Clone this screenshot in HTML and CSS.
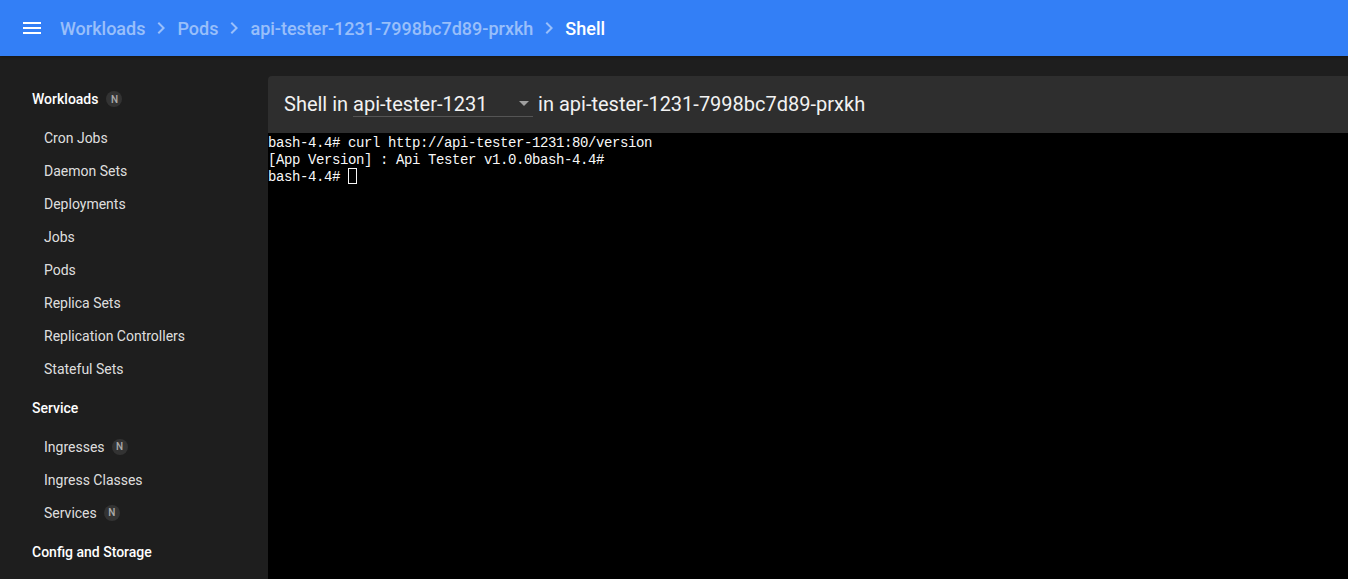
FILE: index.html
```html
<!DOCTYPE html>
<html lang="en">
<head>
<meta charset="utf-8">
<title>Shell - Kubernetes Dashboard</title>
<link rel="stylesheet" href="styles.css">
</head>
<body>
<header class="topbar">
  <svg class="menu-icon" viewBox="0 0 24 24" width="24" height="24"><path d="M3 18h18v-2H3v2zm0-5h18v-2H3v2zm0-7v2h18V6H3z"/></svg>
  <nav class="crumbs">
    <a class="crumb">Workloads</a>
    <svg class="chev" viewBox="0 0 24 24" width="24" height="24"><path d="M10 6L8.59 7.41 13.17 12l-4.58 4.59L10 18l6-6z"/></svg>
    <a class="crumb">Pods</a>
    <svg class="chev" viewBox="0 0 24 24" width="24" height="24"><path d="M10 6L8.59 7.41 13.17 12l-4.58 4.59L10 18l6-6z"/></svg>
    <a class="crumb">api-tester-1231-7998bc7d89-prxkh</a>
    <svg class="chev" viewBox="0 0 24 24" width="24" height="24"><path d="M10 6L8.59 7.41 13.17 12l-4.58 4.59L10 18l6-6z"/></svg>
    <span class="crumb current">Shell</span>
  </nav>
</header>
<div class="layout">
  <aside class="sidebar">
    <div class="group-title first">Workloads <span class="badge">N</span></div>
    <a class="item">Cron Jobs</a>
    <a class="item">Daemon Sets</a>
    <a class="item">Deployments</a>
    <a class="item">Jobs</a>
    <a class="item">Pods</a>
    <a class="item">Replica Sets</a>
    <a class="item">Replication Controllers</a>
    <a class="item">Stateful Sets</a>
    <div class="group-title">Service</div>
    <a class="item">Ingresses <span class="badge">N</span></a>
    <a class="item">Ingress Classes</a>
    <a class="item">Services <span class="badge">N</span></a>
    <div class="group-title">Config and Storage</div>
  </aside>
  <main class="content">
    <div class="toolbar">
      <span>Shell in</span>
      <div class="select">
        <span class="select-value">api-tester-1231</span>
        <span class="select-arrow"></span>
      </div>
      <span>in api-tester-1231-7998bc7d89-prxkh</span>
    </div>
    <div class="terminal">
      <div class="line">bash-4.4# curl http://api-tester-1231:80/version</div>
      <div class="line">[App Version] : Api Tester v1.0.0bash-4.4#</div>
      <div class="line">bash-4.4# <span class="cursor"></span></div>
    </div>
  </main>
</div>
</body>
</html>
```
FILE: styles.css
```css
* { box-sizing: border-box; }
html, body { height: 100%; }
body {
  margin: 0;
  display: flex;
  flex-direction: column;
  height: 579px;
  overflow: hidden;
  background: #1e1e1e;
  font-family: Roboto, "Liberation Sans", sans-serif;
}
.topbar {
  height: 56px;
  flex: none;
  display: flex;
  align-items: center;
  padding-left: 20px;
  background: #337ff6;
  position: relative;
  z-index: 2;
  box-shadow: 0 1px 3px rgba(0,0,0,.3);
}
.menu-icon { fill: #fff; flex: none; }
.crumbs {
  display: flex;
  align-items: center;
  margin-left: 16px;
  font-size: 18px;
  font-weight: 500;
}
.crumb { color: rgba(255,255,255,.5); }
.crumb.current { color: #fff; }
.chev { fill: rgba(255,255,255,.5); margin: 0 4px; flex: none; }
.layout { flex: 1; display: flex; min-height: 0; }
.sidebar {
  width: 268px;
  flex: none;
  padding-top: 32px;
  background: #1e1e1e;
  overflow: hidden;
}
.group-title {
  display: flex;
  align-items: center;
  gap: 8px;
  height: 22px;
  margin: 12px 0 11px;
  padding-left: 32px;
  font-size: 14px;
  font-weight: 500;
  color: #fff;
  white-space: nowrap;
}
.group-title.first { margin-top: 0; }
.item {
  display: flex;
  align-items: center;
  gap: 7px;
  height: 33px;
  padding-left: 44px;
  font-size: 14px;
  color: rgba(255,255,255,.87);
}
.badge {
  width: 16px;
  height: 16px;
  border-radius: 50%;
  background: #333;
  color: rgba(255,255,255,.6);
  font-size: 10px;
  font-weight: 500;
  display: flex;
  align-items: center;
  justify-content: center;
}
.content {
  flex: 1;
  min-width: 0;
  display: flex;
  flex-direction: column;
  padding-top: 20px;
}
.toolbar {
  height: 57px;
  flex: none;
  display: flex;
  align-items: center;
  gap: 5px;
  padding: 0 0 1px 16px;
  background: #2e2e2e;
  border-radius: 4px 0 0 0;
  font-size: 20px;
  color: #f2f2f2;
  white-space: nowrap;
}
.select {
  width: 180px;
  height: 26px;
  display: flex;
  align-items: center;
  justify-content: space-between;
  border-bottom: 1px solid #555;
}
.select-arrow {
  width: 0;
  height: 0;
  margin-right: 4px;
  border-left: 5px solid transparent;
  border-right: 5px solid transparent;
  border-top: 5px solid rgba(255,255,255,.54);
}
.terminal {
  flex: 1;
  background: #000;
  color: #f8f8f8;
  font-family: "Liberation Mono", monospace;
  font-size: 14px;
  letter-spacing: -0.4px;
  line-height: 17px;
  padding-top: 2px;
}
.line { height: 17px; white-space: pre; }
.cursor {
  display: inline-block;
  width: 9px;
  height: 16px;
  margin-top: -1px;
  border: 1px solid #f8f8f8;
  vertical-align: top;
}
```
